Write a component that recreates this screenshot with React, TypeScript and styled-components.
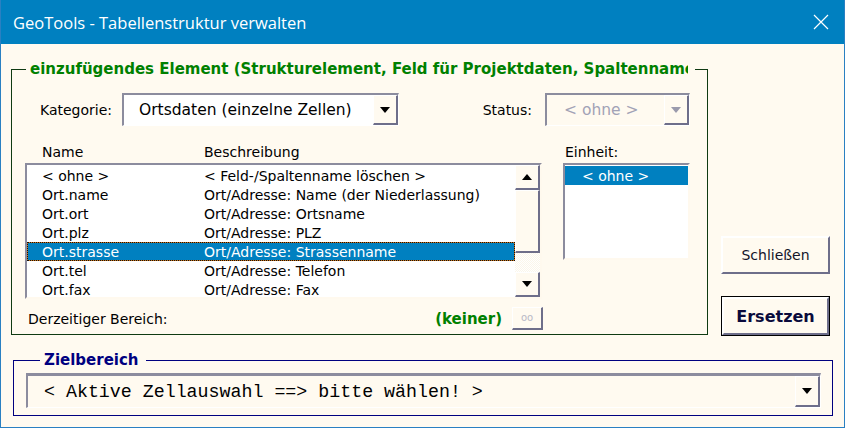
import React from "react";
import styled, { createGlobalStyle } from "styled-components";

const GlobalStyle = createGlobalStyle`
  html, body {
    margin: 0;
    padding: 0;
    background: #fffaf0;
  }
  * {
    box-sizing: border-box;
  }
`;

const FORM_FONT = `"DejaVu Sans", "Liberation Sans", sans-serif`;
const BLUE = "#0080c0";

const Window = styled.div`
  width: 845px;
  height: 428px;
  display: flex;
  flex-direction: column;
  background: #fffaf0;
  border: 1px solid #2a80c2;
  border-top: none;
  font-family: ${FORM_FONT};
  font-size: 14px;
  color: #000;
  overflow: hidden;
`;
const TitleBar = styled.div`
  height: 44px;
  flex: none;
  margin: 0 -1px;
  background: ${BLUE};
  display: flex;
  align-items: center;
  justify-content: space-between;
  padding: 0 16px 0 13px;
  color: #fff;
  font-family: "Open Sans", "Noto Sans", sans-serif;
  font-size: 16.5px;
`;
const CloseBtn = styled.div`
  width: 16px;
  height: 16px;
  display: flex;
`;
const Body = styled.div`
  flex: 1;
  display: flex;
  flex-direction: column;
  padding: 16px 0 0 10px;
`;
const TopSection = styled.div`
  display: flex;
  align-items: flex-end;
  gap: 13px;
`;
const Frame = styled.fieldset<{ $color: string; $width: number }>`
  margin: 0;
  padding: 0;
  min-width: 0;
  width: ${(p) => p.$width}px;
  border: 1px solid ${(p) => p.$color};
`;
const Legend = styled.legend<{ $color: string }>`
  margin-left: 14px;
  padding: 0 7px 0 4px;
  font-weight: bold;
  font-size: 15px;
  line-height: 18px;
  color: ${(p) => p.$color};
`;
const LegendClip = styled.span<{ $max?: number }>`
  display: block;
  white-space: nowrap;
  overflow: hidden;
  ${(p) => (p.$max ? `width: ${p.$max}px;` : "")}
`;
const FieldRow = styled.div`
  display: flex;
  align-items: center;
  margin-top: 15px;
  padding: 0 17px 0 28px;
  height: 33px;
`;
const FieldGroup = styled.div<{ $push?: boolean }>`
  display: flex;
  align-items: center;
  gap: ${(p) => (p.$push ? 13 : 10)}px;
  margin-left: ${(p) => (p.$push ? "auto" : "0")};
`;
const Combo = styled.div<{ $width: number; $height: number; $bg: string }>`
  width: ${(p) => p.$width}px;
  height: ${(p) => p.$height}px;
  display: flex;
  align-items: stretch;
  background: ${(p) => p.$bg};
  border-style: solid;
  border-width: 2px 1px 1px 2px;
  border-color: #8c8c9e #fff #fff #8c8c9e;
`;
const ComboText = styled.div<{ $mono?: boolean; $muted?: boolean; $size: number; $pad: number }>`
  flex: 1;
  display: flex;
  align-items: center;
  padding-left: ${(p) => p.$pad}px;
  font-family: ${(p) => (p.$mono ? `"Liberation Mono", "Courier New", monospace` : FORM_FONT)};
  font-size: ${(p) => p.$size}px;
  color: ${(p) => (p.$muted ? "#a2a2b6" : "#000")};
  white-space: nowrap;
  overflow: hidden;
`;
const Raised = styled.div`
  background: #fffaf0;
  border-style: solid;
  border-width: 1px 2px 2px 1px;
  border-color: #fff #6e6e8a #6e6e8a #fff;
  display: flex;
  align-items: center;
  justify-content: center;
`;
const DropBtn = styled(Raised)`
  width: 25px;
  flex: none;
`;
const Arrow = styled.span<{ $up?: boolean; $muted?: boolean }>`
  width: 0;
  height: 0;
  border-left: 5px solid transparent;
  border-right: 5px solid transparent;
  ${(p) =>
    p.$up
      ? `border-bottom: 6px solid ${p.$muted ? "#9a9aac" : "#000"};`
      : `border-top: 6px solid ${p.$muted ? "#9a9aac" : "#000"};`}
`;
const ListsArea = styled.div`
  display: grid;
  grid-template-columns: 518px 127px;
  column-gap: 20px;
  margin-top: 17px;
  padding-left: 13px;
  align-items: start;
`;
const Column = styled.div`
  display: flex;
  flex-direction: column;
`;
const HeaderRow = styled.div<{ $pad: number }>`
  display: flex;
  height: 18px;
  align-items: center;
  padding-left: ${(p) => p.$pad}px;
  margin-bottom: 2px;
`;
const NameCell = styled.span`
  width: 162px;
  flex: none;
`;
const ListBox = styled.div<{ $width: number; $height: number }>`
  width: ${(p) => p.$width}px;
  height: ${(p) => p.$height}px;
  display: flex;
  background: #fff;
  border-style: solid;
  border-width: 2px;
  border-color: #8c8c9e #fff9ee #fff9ee #8c8c9e;
`;
const ListRows = styled.div`
  flex: 1;
  padding-top: 1px;
  overflow: hidden;
`;
const ListRow = styled.div<{ $selected?: boolean; $focus?: boolean; $pad: number }>`
  height: 19px;
  display: flex;
  align-items: center;
  padding-left: ${(p) => p.$pad}px;
  white-space: nowrap;
  color: ${(p) => (p.$selected ? "#fff" : "#000")};
  background: ${(p) => (p.$selected ? BLUE : "transparent")};
  ${(p) =>
    p.$focus
      ? `border: 1px dotted #1a1208;
         padding-left: ${p.$pad - 1}px;
         background: linear-gradient(${BLUE}, ${BLUE}) padding-box, #c8741e border-box;`
      : ""}
`;
const ScrollBar = styled.div`
  width: 25px;
  flex: none;
  display: flex;
  flex-direction: column;
`;
const ScrollBtn = styled(Raised)`
  height: 25px;
  flex: none;
`;
const Thumb = styled(Raised)`
  height: 63px;
  flex: none;
`;
const Track = styled.div`
  flex: 1;
  background: repeating-conic-gradient(#ffffff 0% 25%, #fbf6ea 0% 50%) 0 0 / 2px 2px;
`;
const StatusRow = styled.div`
  display: flex;
  align-items: center;
  height: 23px;
  margin-top: 8px;
  padding-left: 3px;
  margin-bottom: 4px;
`;
const Keiner = styled.span`
  margin-left: auto;
  margin-right: 10px;
  color: #008000;
  font-weight: bold;
  font-size: 15px;
`;
const SmallBtn = styled(Raised)`
  width: 31px;
  height: 23px;
  color: #b8b8c6;
  font-size: 10px;
  padding-bottom: 1px;
`;
const ButtonCol = styled.div`
  display: flex;
  flex-direction: column;
  gap: 22px;
  width: 109px;
  margin-bottom: -1px;
`;
const PushButton = styled.div<{ $default?: boolean }>`
  height: ${(p) => (p.$default ? 40 : 38)}px;
  display: flex;
  ${(p) => (p.$default ? "border: 1px solid #000;" : "")}
`;
const PushFace = styled(Raised)<{ $bold?: boolean }>`
  flex: 1;
  border-width: 2px;
  font-size: ${(p) => (p.$bold ? 16 : 14)}px;
  font-weight: ${(p) => (p.$bold ? "bold" : "normal")};
  color: ${(p) => (p.$bold ? "#0a0a3c" : "#14142a")};
`;
const TargetFrame = styled(Frame)`
  margin: 16px 0 0 2px;
  padding: 0 11px 7px 12px;
`;
const TargetCombo = styled(Combo)`
  margin-top: 4px;
  border-width: 3px 1px 1px 2px;
`;

const rows = [
  ["< ohne >", "< Feld-/Spaltenname löschen >"],
  ["Ort.name", "Ort/Adresse: Name (der Niederlassung)"],
  ["Ort.ort", "Ort/Adresse: Ortsname"],
  ["Ort.plz", "Ort/Adresse: PLZ"],
  ["Ort.strasse", "Ort/Adresse: Strassenname"],
  ["Ort.tel", "Ort/Adresse: Telefon"],
  ["Ort.fax", "Ort/Adresse: Fax"],
];

export default function App() {
  return (
    <>
      <GlobalStyle />
      <Window>
        <TitleBar>
          <span>GeoTools - Tabellenstruktur verwalten</span>
          <CloseBtn>
            <svg width="16" height="16" viewBox="0 0 16 16">
              <path d="M1 1L15 15M15 1L1 15" stroke="#fff" strokeWidth="1.2" fill="none" />
            </svg>
          </CloseBtn>
        </TitleBar>
        <Body>
          <TopSection>
            <Frame $color="#0f3a12" $width={697}>
              <Legend $color="#008000">
                <LegendClip $max={658}>
                  einzufügendes Element (Strukturelement, Feld für Projektdaten, Spaltenname)
                </LegendClip>
              </Legend>
              <FieldRow>
                <FieldGroup>
                  <span>Kategorie:</span>
                  <Combo $width={277} $height={33} $bg="#fff">
                    <ComboText $size={15.5} $pad={15}>
                      Ortsdaten (einzelne Zellen)
                    </ComboText>
                    <DropBtn>
                      <Arrow />
                    </DropBtn>
                  </Combo>
                </FieldGroup>
                <FieldGroup $push>
                  <span>Status:</span>
                  <Combo $width={145} $height={33} $bg="#fffaf0">
                    <ComboText $size={15.5} $pad={17} $muted>
                      &lt; ohne &gt;
                    </ComboText>
                    <DropBtn>
                      <Arrow $muted />
                    </DropBtn>
                  </Combo>
                </FieldGroup>
              </FieldRow>
              <ListsArea>
                <Column>
                  <HeaderRow $pad={17}>
                    <NameCell>Name</NameCell>
                    <span>Beschreibung</span>
                  </HeaderRow>
                  <ListBox $width={517} $height={136}>
                    <ListRows>
                      {rows.map(([name, desc], i) => (
                        <ListRow key={name} $pad={15} $selected={i === 4} $focus={i === 4}>
                          <NameCell>{name}</NameCell>
                          <span>{desc}</span>
                        </ListRow>
                      ))}
                    </ListRows>
                    <ScrollBar>
                      <ScrollBtn>
                        <Arrow $up />
                      </ScrollBtn>
                      <Thumb />
                      <Track />
                      <ScrollBtn>
                        <Arrow />
                      </ScrollBtn>
                    </ScrollBar>
                  </ListBox>
                  <StatusRow>
                    <span>Derzeitiger Bereich:</span>
                    <Keiner>(keiner)</Keiner>
                    <SmallBtn>oo</SmallBtn>
                  </StatusRow>
                </Column>
                <Column>
                  <HeaderRow $pad={2}>Einheit:</HeaderRow>
                  <ListBox $width={127} $height={97}>
                    <ListRows>
                      <ListRow $pad={17} $selected>
                        &lt; ohne &gt;
                      </ListRow>
                    </ListRows>
                  </ListBox>
                </Column>
              </ListsArea>
            </Frame>
            <ButtonCol>
              <PushButton>
                <PushFace>Schließen</PushFace>
              </PushButton>
              <PushButton $default>
                <PushFace $bold>Ersetzen</PushFace>
              </PushButton>
            </ButtonCol>
          </TopSection>
          <TargetFrame $color="#000080" $width={820}>
            <Legend $color="#000080">
              <LegendClip>Zielbereich</LegendClip>
            </Legend>
            <TargetCombo $width={795} $height={35} $bg="#fffaf0">
              <ComboText $mono $size={18.3} $pad={16}>
                &lt; Aktive Zellauswahl ==&gt; bitte wählen! &gt;
              </ComboText>
              <DropBtn>
                <Arrow />
              </DropBtn>
            </TargetCombo>
          </TargetFrame>
        </Body>
      </Window>
    </>
  );
}
